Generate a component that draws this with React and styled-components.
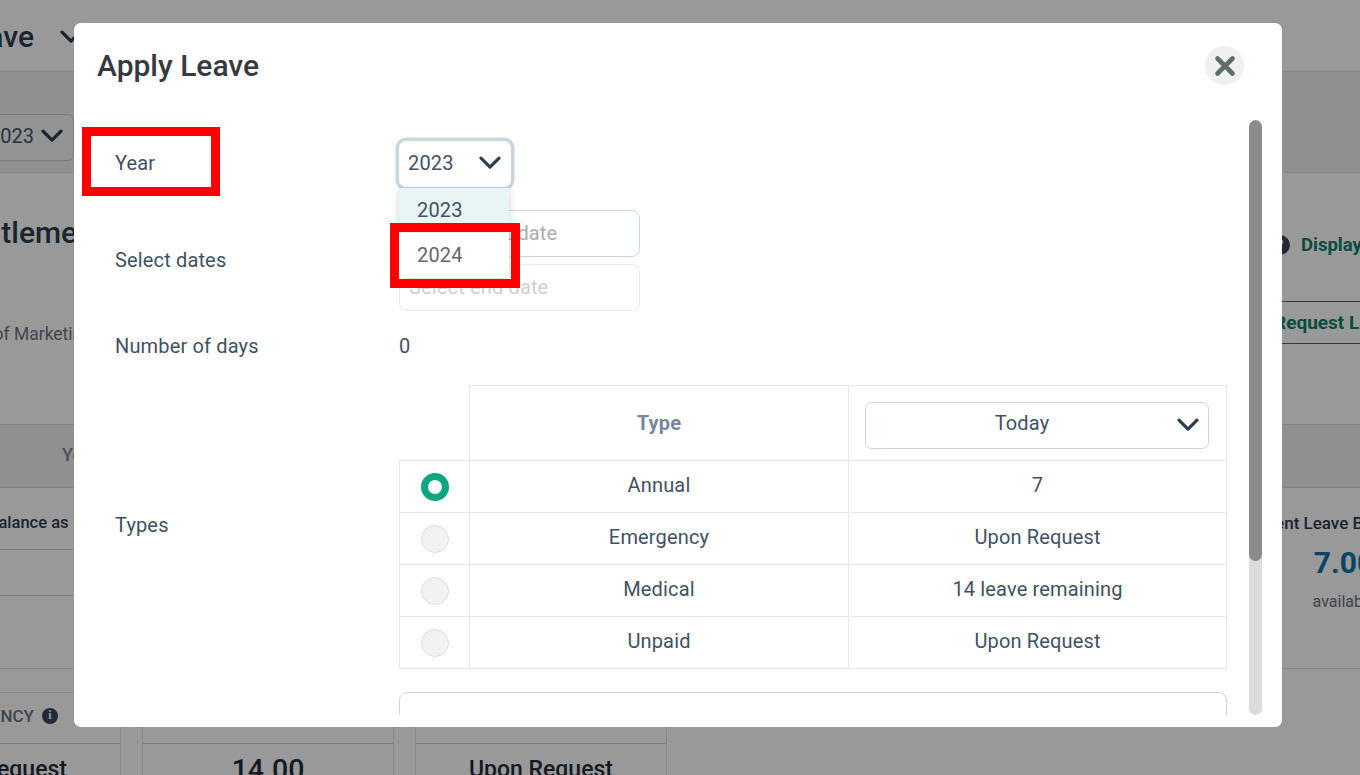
import React from "react";
import styled, { createGlobalStyle } from "styled-components";

const Global = createGlobalStyle`
  html, body { margin: 0; padding: 0; background: #fff; }
  body { font-family: Roboto, "Liberation Sans", sans-serif; color: #3f5163; overflow: hidden; }
  * { box-sizing: border-box; }
`;

const Page = styled.div`
  width: 1360px; height: 775px; overflow: hidden; background: #fff;
`;
const TopBar = styled.div`
  height: 72px; display: flex; align-items: center; gap: 26px; padding-top: 2px;
  margin-left: -45px; border-bottom: 1px solid #d9dde0;
`;
const PageTitle = styled.div`font-size: 30px; font-weight: 500; color: #2c3e50; white-space: nowrap;`;
const FilterBar = styled.div`
  height: 101px; padding-top: 30px; background: #f0f1f2; border-bottom: 1px solid #dcdfe2; display: flex; align-items: center;
`;
const BgSelect = styled.div`
  width: 134px; height: 47px; margin-left: -60px; border: 1px solid #c5ced6; border-radius: 6px; background: #f4f5f6;
  display: flex; align-items: center; justify-content: space-between; padding: 0 10px 2px 48px; font-size: 20px; color: #44566a;
`;
const Summary = styled.div`
  height: 252px; display: flex; justify-content: space-between; border-bottom: 1px solid #d9dde0;
`;
const SummaryLeft = styled.div`display: flex; flex-direction: column; margin-left: -50px; padding-top: 42px;`;
const Heading = styled.div`font-size: 30px; font-weight: 500; color: #2c3e50; line-height: 36px; white-space: nowrap;`;
const SubRole = styled.div`font-size: 17.5px; color: #6c757d; margin-top: 73px; margin-left: -2px; white-space: nowrap;`;
const SummaryRight = styled.div`width: 98px; display: flex; flex-direction: column; padding-top: 59px; white-space: nowrap;`;
const DisplayLink = styled.div`
  display: flex; align-items: center; gap: 11px; margin-left: 8px; font-size: 18.5px; font-weight: 700; color: #0a8066; height: 26px;
`;
const HelpDot = styled.span`
  width: 20px; height: 20px; border-radius: 50%; background: #34495e; color: #fff; font-size: 14px; font-weight: 700;
  display: flex; align-items: center; justify-content: center; flex: none;
`;
const RequestButton = styled.div`
  width: 160px; height: 43px; margin-top: 43px; border: 1px solid #0a8066; border-radius: 4px; color: #0a8066;
  font-size: 19px; font-weight: 700; display: flex; align-items: center; padding-left: 11px;
`;
const BandHead = styled.div`
  height: 63px; background: #eff0f2; border-bottom: 1px solid #d3d8dc; padding: 0 0 4px 62px; display: flex; align-items: center;
  font-size: 18px; font-weight: 500; color: #7b8794;
`;
const Band = styled.div`
  height: 181px; display: flex; justify-content: space-between; border-bottom: 1px solid #d9dde0;
`;
const BandLeft = styled.div`width: 100px; display: flex; flex-direction: column;`;
const BandLeftCell = styled.div`
  height: ${p => p.$h}px; border-bottom: 1px solid #cfd4d9; font-size: 16.5px; font-weight: 500; color: #2c3e50; padding-top: 8px;
  display: flex; align-items: center; white-space: nowrap; text-indent: -12px;
`;
const BandRight = styled.div`
  width: 156px; margin-right: -62px; display: flex; flex-direction: column; align-items: center; padding-top: 24px; white-space: nowrap;
`;
const BandLabel = styled.div`font-size: 17px; font-weight: 500; color: #2c3e50; line-height: 22px; margin-right: 32px;`;
const BandValue = styled.div`font-size: 30px; font-weight: 700; color: #0b76a8; line-height: 36px; margin-top: 11px;`;
const BandNote = styled.div`font-size: 16px; color: #6c757d; margin-top: 11px;`;
const Cards = styled.div`
  display: flex; gap: 21px; margin: 23px 0 0 -131px;
`;
const Card = styled.div`
  width: 252px; height: 120px; flex: none; border: 1px solid #dfe2e5; border-bottom: 0;
`;
const CardHead = styled.div`
  height: 51px; border-bottom: 1px solid #cfd4d9; display: flex; align-items: center; justify-content: flex-end; gap: 8px;
  padding: 0 62px 5px 0; font-size: 17px; font-weight: 500; color: #6c757d;
`;
const InfoDot = styled.span`
  width: 16px; height: 16px; border-radius: 50%; background: #34495e; color: #fff; font-size: 12px; font-weight: 700;
  display: flex; align-items: center; justify-content: center; font-family: "Liberation Serif", serif;
`;
const CardValue = styled.div`
  text-align: center; font-size: ${p => p.$big ? "28.5px" : "23px"}; font-weight: 500; color: #1f2d3a; line-height: 30px; padding-top: 11px;
`;

const Overlay = styled.div`position: fixed; inset: 0; background: rgba(0,0,0,.4);`;
const Modal = styled.div`
  width: 1208px; height: 704px; margin: 23px 0 0 74px; background: #fff; border-radius: 7px;
  display: flex; flex-direction: column; position: relative;
`;
const ModalHead = styled.div`
  height: 97px; flex: none; display: flex; align-items: flex-start; justify-content: space-between;
  padding: 23px 38px 0 23px;
`;
const ModalTitle = styled.h2`margin: 0; font-size: 30px; line-height: 40px; font-weight: 500; color: #343a40;`;
const CloseButton = styled.div`
  width: 39px; height: 39px; border-radius: 50%; background: #eef0f1; display: flex; align-items: center; justify-content: center;
`;
const ModalBody = styled.div`
  flex: 1; min-height: 0; display: flex; padding: 0 20px 12px 0;
`;
const Form = styled.div`
  flex: 1; min-width: 0; overflow: hidden; padding: 21px 22px 0 41px; position: relative;
  display: flex; flex-direction: column; gap: 23px;
`;
const ScrollTrack = styled.div`width: 13px; flex: none; background: #dcdcdc; border-radius: 7px; overflow: hidden;`;
const ScrollThumb = styled.div`height: 441px; background: #8b8b8b; border-radius: 7px;`;

const Row = styled.div`display: grid; grid-template-columns: 284px 1fr; align-items: center; flex: none;`;
const Label = styled.div`font-size: 20px; letter-spacing: .15px; color: #3f5163; padding-bottom: 2px;`;
const TypesLabel = styled(Label)`padding-bottom: 4px;`;
const Value = styled.div`font-size: 20px; letter-spacing: .15px; color: #3f5163; line-height: 24px; padding-bottom: 2px;`;
const SelectWrap = styled.div`position: relative; width: 112px; height: 46px;`;
const YearSelect = styled.div`
  width: 112px; height: 46px; border-radius: 7px; background: #fff; box-shadow: 0 0 0 3.5px #c9d6dd;
  display: flex; align-items: center; justify-content: space-between; padding: 0 10px 2px 9px;
  font-size: 20px; letter-spacing: .15px; color: #3f5163;
`;
const Dropdown = styled.div`
  position: absolute; left: 0; top: 47px; width: 110px; background: #fff; z-index: 3;
  box-shadow: 0 2px 8px rgba(0,0,0,.18);
`;
const Option = styled.div`
  height: 45px; padding: 0 0 2px 18px; display: flex; align-items: center; font-size: 20px; letter-spacing: .15px;
  background: ${p => p.$active ? "#e9f5f4" : "#fff"}; color: ${p => p.$active ? "#3f5163" : "#666"};
`;
const Stack = styled.div`display: flex; flex-direction: column; gap: 7px;`;
const DateInput = styled.div`
  width: 241px; height: 47px; border-radius: 8px; border: 1.5px solid ${p => p.$faded ? "#e6eaed" : "#ccd5dc"};
  display: flex; align-items: center; padding: 0 0 1px 9px; font-size: 20px; letter-spacing: .15px;
  color: ${p => p.$faded ? "#d0d0d0" : "#adadad"};
`;
const TableRow = styled(Row)`margin-top: 2px;`;
const Table = styled.table`
  width: 827px; border-collapse: collapse; table-layout: fixed; font-size: 20px; letter-spacing: .15px; color: #3f5163;
`;
const Th = styled.th`
  height: 75px; border: 1.5px solid #e6e8ea; font-weight: 700; font-size: 20px; color: #76879a; text-align: center; padding: 0;
  ${p => p.$blank && "border-top: 0; border-left: 0;"}
`;
const Td = styled.td`
  height: 52px; border: 1.5px solid #e6e8ea; text-align: center; padding: 0;
`;
const TextTd = styled(Td)`padding-bottom: 4px;`;
const TodaySelect = styled.div`
  width: 344px; height: 47px; margin: 4px 0 0 16px; border: 1.5px solid #ccd5dc; border-radius: 7px; font-weight: 400; color: #3f5163;
  display: flex; align-items: center; justify-content: center; position: relative; padding: 0 30px 5px 0;
`;
const ChevronSlot = styled.span`position: absolute; right: 9px; top: 15px; display: flex;`;
const Radio = styled.span`
  display: block; width: 28px; height: 28px; margin: 0 auto; border-radius: 50%;
  background: ${p => p.$on ? "#fff" : "#f2f2f2"};
  border: ${p => p.$on ? "7px solid #0da582" : "1.5px solid #dedede"};
`;
const Notes = styled.div`
  flex: none; width: 828px; margin-left: 284px; height: 110px; border: 1.5px solid #ccd5dc; border-radius: 8px;
`;
const RedBox = styled.div`
  position: fixed; left: ${p => p.$x}px; top: ${p => p.$y}px; width: ${p => p.$w}px; height: ${p => p.$h}px;
  border: 9px solid #ff0000; z-index: 5;
`;

const Chevron = ({ size = 22 }) => (
  <svg width={size} height={size * 0.6} viewBox="0 0 22 13" fill="none">
    <path d="M2 2 L11 11 L20 2" stroke="#2c3e50" strokeWidth="3.2" strokeLinecap="round" strokeLinejoin="round" />
  </svg>
);

const types = [
  ["Annual", "7", true],
  ["Emergency", "Upon Request"],
  ["Medical", "14 leave remaining"],
  ["Unpaid", "Upon Request"],
];

export default function App() {
  return (
    <>
      <Global />
      <Page>
        <TopBar>
          <PageTitle>Leave</PageTitle>
          <Chevron />
        </TopBar>
        <FilterBar>
          <BgSelect>2023 <Chevron /></BgSelect>
        </FilterBar>
        <Summary>
          <SummaryLeft>
            <Heading>Entitlement</Heading>
            <SubRole>Head of Marketing</SubRole>
          </SummaryLeft>
          <SummaryRight>
            <DisplayLink><HelpDot>?</HelpDot>Display Policy</DisplayLink>
            <RequestButton>Request Leave</RequestButton>
          </SummaryRight>
        </Summary>
        <BandHead>Year</BandHead>
        <Band>
          <BandLeft>
            <BandLeftCell $h={62}>Balance as</BandLeftCell>
            <BandLeftCell $h={46} />
          </BandLeft>
          <BandRight>
            <BandLabel>Current Leave Balance</BandLabel>
            <BandValue>7.00</BandValue>
            <BandNote>available</BandNote>
          </BandRight>
        </Band>
        <Cards>
          <Card>
            <CardHead>EMERGENCY <InfoDot>i</InfoDot></CardHead>
            <CardValue>Upon Request</CardValue>
          </Card>
          <Card>
            <CardHead>MEDICAL</CardHead>
            <CardValue $big>14.00</CardValue>
          </Card>
          <Card>
            <CardHead>UNPAID</CardHead>
            <CardValue>Upon Request</CardValue>
          </Card>
        </Cards>
      </Page>
      <Overlay>
        <Modal>
          <ModalHead>
            <ModalTitle>Apply Leave</ModalTitle>
            <CloseButton>
              <svg width="22" height="22" viewBox="0 0 22 22">
                <path d="M3.5 3.5 L18.5 18.5 M18.5 3.5 L3.5 18.5" stroke="#5f6e6a" strokeWidth="4.6" strokeLinecap="round" />
              </svg>
            </CloseButton>
          </ModalHead>
          <ModalBody>
            <Form>
              <Row>
                <Label>Year</Label>
                <SelectWrap>
                  <YearSelect>2023 <Chevron /></YearSelect>
                  <Dropdown>
                    <Option $active>2023</Option>
                    <Option>2024</Option>
                  </Dropdown>
                </SelectWrap>
              </Row>
              <Row>
                <Label>Select dates</Label>
                <Stack>
                  <DateInput>Select start date</DateInput>
                  <DateInput $faded>Select end date</DateInput>
                </Stack>
              </Row>
              <Row>
                <Label>Number of days</Label>
                <Value>0</Value>
              </Row>
              <TableRow>
                <TypesLabel>Types</TypesLabel>
                <Table>
                  <colgroup>
                    <col width="70" /><col width="379" /><col width="378" />
                  </colgroup>
                  <thead>
                    <tr>
                      <Th $blank />
                      <Th>Type</Th>
                      <Th>
                        <TodaySelect>Today<ChevronSlot><Chevron /></ChevronSlot></TodaySelect>
                      </Th>
                    </tr>
                  </thead>
                  <tbody>
                    {types.map(([name, value, on]) => (
                      <tr key={name}>
                        <Td><Radio $on={on} /></Td>
                        <TextTd>{name}</TextTd>
                        <TextTd>{value}</TextTd>
                      </tr>
                    ))}
                  </tbody>
                </Table>
              </TableRow>
              <Notes />
            </Form>
            <ScrollTrack><ScrollThumb /></ScrollTrack>
          </ModalBody>
        </Modal>
        <RedBox $x={82} $y={127} $w={138} $h={69} />
        <RedBox $x={390} $y={223} $w={130} $h={65} />
      </Overlay>
    </>
  );
}
